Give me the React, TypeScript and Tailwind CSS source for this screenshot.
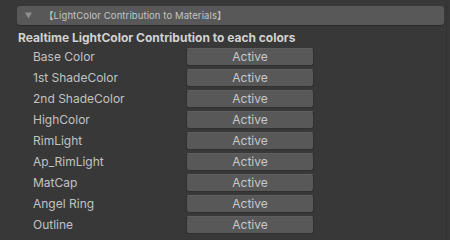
const rows = [
  "Base Color",
  "1st ShadeColor",
  "2nd ShadeColor",
  "HighColor",
  "RimLight",
  "Ap_RimLight",
  "MatCap",
  "Angel Ring",
  "Outline",
];

export default function App() {
  return (
    <div
      className="w-[450px] h-[240px] bg-[#383838] text-[#c4c4c4] overflow-hidden flex"
      style={{ fontFamily: "Inter, 'Noto Sans', 'Noto Sans CJK JP', sans-serif" }}
    >
      <div className="w-[446px] flex flex-col pl-[17px] pr-[2px] pt-[6px]">
        {/* foldout header */}
        <div className="h-[19px] bg-[#585858] rounded-[3px] shadow-[0_1px_0_#2a2a2a] flex items-center pl-[8px] gap-[12px]">
          <svg width="7" height="7" viewBox="0 0 7 7">
            <path d="M0 0.5 L7 0.5 L3.5 6.5 Z" fill="#8f8f8f" />
          </svg>
          <span className="text-[9.5px] text-[#c4c4c4] leading-none tracking-[0.1px]">
            【LightColor Contribution to Materials】
          </span>
        </div>

        <div className="mt-[5px] text-[12px] font-bold text-[#d2d2d2] leading-[16px] pl-[1px]">
          Realtime LightColor Contribution to each colors
        </div>

        <div className="flex flex-col gap-[3px] mt-[2px]">
          {rows.map((label) => (
            <div key={label} className="flex items-center h-[18px]">
              <span className="w-[169px] pl-[16px] text-[12px] leading-none text-[#c2c2c2]">{label}</span>
              <button className="w-[128px] h-[18px] bg-[#585858] rounded-[3px] border border-[#303030] border-t-[#5f5f5f] text-[12px] text-[#c8c8c8] leading-none">
                Active
              </button>
            </div>
          ))}
        </div>
      </div>
      <div className="flex-1 bg-[#383838] border-l border-[#323232]" />
    </div>
  );
}
